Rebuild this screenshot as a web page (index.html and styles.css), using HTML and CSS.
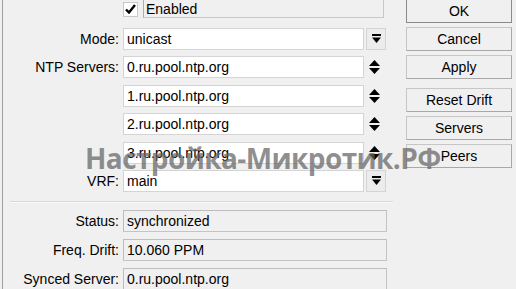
FILE: index.html
```html
<!DOCTYPE html>
<html lang="en">
  <head>
    <meta charset="UTF-8" />
    <title>NTP Client</title>
    <link rel="stylesheet" href="styles.css">
  </head>
  <body>
    <div class="window">
      <div class="form">
        <div class="row row-enabled">
          <span class="label"></span>
          <span class="checkbox"><svg width="11" height="10" viewBox="0 0 11 10"><path d="M1 5.5l3 3L10 1" fill="none" stroke="#000" stroke-width="2.4"/></svg></span>
          <span class="check-label">Enabled</span>
        </div>

        <div class="fields">
          <div class="row">
            <span class="label">Mode:</span>
            <span class="input">unicast</span>
            <span class="drop"><svg width="9" height="10" viewBox="0 0 9 10"><rect x="0" y="0" width="9" height="2" fill="#000"/><path d="M0 3.5h9L4.5 9z" fill="#000"/></svg></span>
          </div>
          <div class="row">
            <span class="label">NTP Servers:</span>
            <span class="input">0.ru.pool.ntp.org</span>
            <span class="spin"><svg width="11" height="14" viewBox="0 0 11 14"><path d="M5.5 0L11 6H0z" fill="#000"/><path d="M0 8h11L5.5 14z" fill="#000"/></svg></span>
          </div>
          <div class="row">
            <span class="label"></span>
            <span class="input">1.ru.pool.ntp.org</span>
            <span class="spin"><svg width="11" height="14" viewBox="0 0 11 14"><path d="M5.5 0L11 6H0z" fill="#000"/><path d="M0 8h11L5.5 14z" fill="#000"/></svg></span>
          </div>
          <div class="row">
            <span class="label"></span>
            <span class="input">2.ru.pool.ntp.org</span>
            <span class="spin"><svg width="11" height="14" viewBox="0 0 11 14"><path d="M5.5 0L11 6H0z" fill="#000"/><path d="M0 8h11L5.5 14z" fill="#000"/></svg></span>
          </div>
          <div class="row">
            <span class="label"></span>
            <span class="input">3.ru.pool.ntp.org</span>
            <span class="spin"><svg width="11" height="14" viewBox="0 0 11 14"><path d="M5.5 0L11 6H0z" fill="#000"/><path d="M0 8h11L5.5 14z" fill="#000"/></svg></span>
          </div>
          <div class="row">
            <span class="label">VRF:</span>
            <span class="input">main</span>
            <span class="drop"><svg width="9" height="10" viewBox="0 0 9 10"><rect x="0" y="0" width="9" height="2" fill="#000"/><path d="M0 3.5h9L4.5 9z" fill="#000"/></svg></span>
          </div>
        </div>

        <div class="separator"></div>

        <div class="status">
          <div class="row">
            <span class="label">Status:</span>
            <span class="readonly">synchronized</span>
          </div>
          <div class="row">
            <span class="label">Freq. Drift:</span>
            <span class="readonly">10.060 PPM</span>
          </div>
          <div class="row">
            <span class="label">Synced Server:</span>
            <span class="readonly">0.ru.pool.ntp.org</span>
          </div>
        </div>
      </div>

      <div class="buttons">
        <div class="group">
          <button class="btn btn-default">OK</button>
          <button class="btn">Cancel</button>
          <button class="btn">Apply</button>
        </div>
        <div class="group">
          <button class="btn">Reset Drift</button>
          <button class="btn">Servers</button>
          <button class="btn">Peers</button>
        </div>
      </div>

      <div class="watermark">Настройка-Микротик.РФ</div>
    </div>
  </body>
</html>
```

FILE: styles.css
```css
* {
  margin: 0;
  padding: 0;
  box-sizing: border-box;
}

body {
  font-family: "Liberation Sans", Arial, sans-serif;
  font-size: 14px;
  color: #000;
  background: #f0f0f0;
  width: 516px;
  height: 289px;
  overflow: hidden;
}

.window {
  position: relative;
  display: flex;
  height: 289px;
  margin-left: 2px;
  border-left: 1px solid #a0a0a0;
}

.form {
  width: 383px;
  margin-left: 7px;
}

.row {
  display: flex;
  align-items: center;
  height: 22px;
}

.label {
  width: 109px;
  margin-right: 4px;
  text-align: right;
  white-space: nowrap;
}

.row-enabled {
  margin-top: -4px;
}

.checkbox {
  display: flex;
  align-items: center;
  justify-content: center;
  width: 15px;
  height: 15px;
  margin-top: 4px;
  background: #fff;
  border: 1px solid #c9c9c9;
}

.check-label {
  width: 241px;
  height: 21px;
  margin-left: 5px;
  padding: 3px 0 0 2px;
  border: 1px solid #adadad;
  border-right-color: #c8c8c8;
  border-bottom-color: #c8c8c8;
}

.fields {
  display: flex;
  flex-direction: column;
  gap: 6.4px;
  margin-top: 10px;
}

.input {
  width: 241px;
  height: 22px;
  padding: 2px 0 0 3px;
  background: #fff;
  border: 1px solid #d4d4d4;
}

.drop {
  display: flex;
  align-items: center;
  justify-content: center;
  width: 20px;
  height: 22px;
  margin-left: 2px;
  border: 1px solid #d4d4d4;
  background: #ececec;
}

.spin {
  display: flex;
  align-items: center;
  justify-content: center;
  width: 20px;
  height: 22px;
}

.separator {
  height: 2px;
  margin: 9px 0 7px;
  border-top: 1px solid #d8d8d8;
  border-bottom: 1px solid #fafafa;
}

.status {
  display: flex;
  flex-direction: column;
  gap: 7px;
}

.readonly {
  width: 264px;
  height: 22px;
  padding: 2px 0 0 3px;
  border: 1px solid #c4c4c4;
  border-top-color: #bdbdbd;
  border-left-color: #bdbdbd;
}

.buttons {
  display: flex;
  flex-direction: column;
  gap: 9px;
  margin-left: 13px;
  margin-top: -1px;
}

.group {
  display: flex;
  flex-direction: column;
  gap: 4px;
}

.btn {
  width: 106px;
  height: 24px;
  font-family: "Liberation Sans", Arial, sans-serif;
  font-size: 14px;
  color: #000;
  background: #f0f0f0;
  border: 1px solid #c6c6c6;
  border-right-color: #a8a8a8;
  border-bottom-color: #a8a8a8;
}

.btn-default {
  border-color: #8a8a8a;
}

.watermark {
  position: absolute;
  left: 82px;
  top: 139px;
  font-family: "Open Sans", sans-serif;
  font-weight: 700;
  font-size: 28px;
  letter-spacing: -0.6px;
  color: rgba(100, 100, 100, 0.72);
  white-space: nowrap;
  pointer-events: none;
}
```
